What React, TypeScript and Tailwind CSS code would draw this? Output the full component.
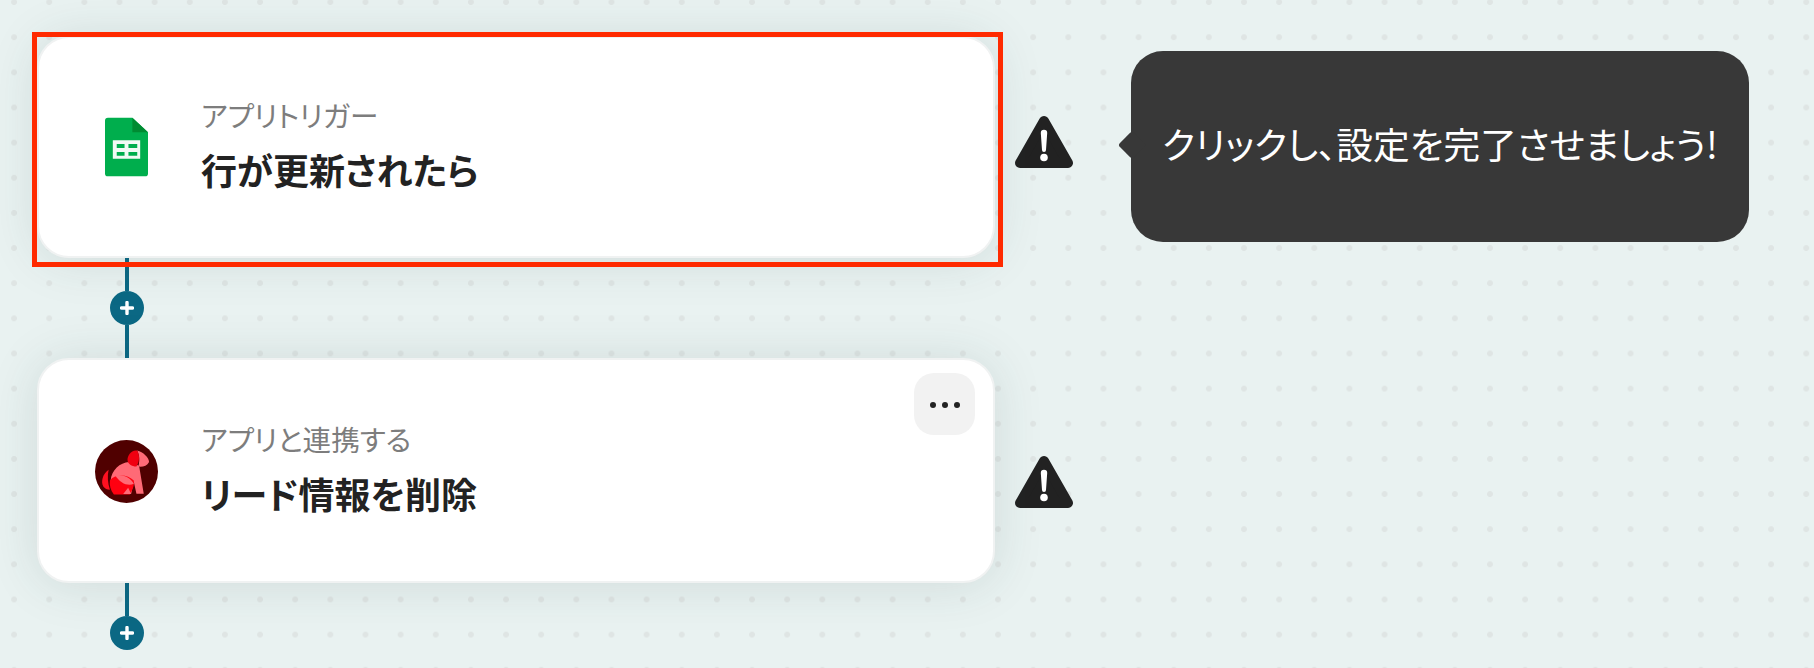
import React from "react";

const FONT = "font-['Noto_Sans_CJK_JP','Noto_Sans',sans-serif] [font-feature-settings:'palt']";

function SheetsIcon() {
  return (
    <svg width="43" height="60" viewBox="0 0 44 60" className="mb-[1px] mr-[3px]">
      <path d="M3 0H28L44 15V57a3 3 0 0 1-3 3H3a3 3 0 0 1-3-3V3a3 3 0 0 1 3-3Z" fill="#00ae4d" />
      <path d="M28 0L44 15H28Z" fill="#008b32" />
      <path fillRule="evenodd" d="M8 23H36V42H8ZM12 27V31H20V27ZM24 27V31H33V27ZM12 35V39H20V35ZM24 35V39H33V35Z" fill="#f1faf4" />
    </svg>
  );
}

function DogIcon() {
  return (
    <svg width="63" height="63" viewBox="105 118 190 190" className="mr-[2px] mt-[2px] shrink-0">
      <circle cx="200" cy="213" r="95" fill="#500000" />
      <path d="M146 208C128 220 122 245 130 258C134 264 142 268 150 268C143 248 142 226 146 208Z" fill="#ff1020" />
      <path d="M152 240C155 208 180 186 208 184L238 196L252 280H230L222 244L214 280H165Z" fill="#ff6a76" />
      <path d="M232 150C250 154 268 172 268 184C262 196 248 200 236 198C240 180 240 165 232 150Z" fill="#ff6a76" />
      <path d="M232 150C214 147 203 165 203 178C204 190 215 197 230 198C240 182 240 165 232 150Z" fill="#f00010" />
      <path d="M150 240C165 218 205 222 222 240C225 258 215 272 210 282H162C152 270 148 255 150 240Z" fill="#ff0010" />
      <path d="M166 224C192 220 212 232 222 250C204 258 180 248 166 224Z" fill="#ff6a76" />
      <path d="M190 281L205 262L214 281Z" fill="#ff6a76" />
    </svg>
  );
}

function WarningIcon({ className }: { className: string }) {
  return (
    <svg className={className} width="60" height="54" viewBox="0 0 60 54">
      <path d="M30 6L54 48H6Z" fill="#222222" stroke="#222222" strokeWidth="10" strokeLinejoin="round" />
      <path d="M26.8 18a3.2 3.2 0 0 1 6.4 0L32 35a2 2 0 0 1-4 0Z" fill="#ffffff" />
      <circle cx="30" cy="42.5" r="3.8" fill="#ffffff" />
    </svg>
  );
}

function Connector({ tail }: { tail?: boolean }) {
  return (
    <div className="ml-[73px] flex w-[34px] flex-col items-center">
      <div className="h-[33px] w-[4px] bg-[#0b6884]" />
      <div className="flex h-[34px] w-[34px] items-center justify-center rounded-full bg-[#0b6884]">
        <svg width="14" height="14" viewBox="0 0 14 14">
          <path d="M7 1.5V12.5M1.5 7H12.5" stroke="#ffffff" strokeWidth="3.4" strokeLinecap="round" />
        </svg>
      </div>
      {tail && <div className="h-[33px] w-[4px] bg-[#0b6884]" />}
    </div>
  );
}

function Card({ icon, sub, title, tall, children }: { icon: React.ReactNode; sub: string; title: string; tall?: boolean; children?: React.ReactNode }) {
  return (
    <div className={`relative flex w-[958px] items-center rounded-[32px] border-2 border-[#f0f2f2] bg-white pl-[57px] shadow-[0_2px_50px_rgba(40,70,70,0.13)] ${tall ? "h-[225px]" : "h-[222px]"}`}>
      <div className="flex w-[63px] justify-center">{icon}</div>
      <div className="ml-[42px] flex flex-col">
        <div className="mt-[-4px] text-[28.6px] leading-[36px] text-[#7d7d7d]">{sub}</div>
        <div className="mt-[12px] text-[36px] font-bold leading-[48px] text-[#222222]">{title}</div>
      </div>
      {children}
    </div>
  );
}

export default function App() {
  return (
    <div className={`${FONT} relative h-[668px] w-[1814px] overflow-hidden bg-[#e9f2f1] bg-[radial-gradient(circle,#dfe5e4_2.6px,transparent_3.2px)] bg-[length:35.15px_35.15px] bg-[position:-3.5px_-15.5px] pl-[37px] pt-[36px]`}>
      <div className="flex items-start">
        <div className="relative">
          <Card icon={<SheetsIcon />} sub="アプリトリガー" title="行が更新されたら" />
          <div className="absolute left-[-5px] top-[-4px] h-[235px] w-[971px] border-[5px] border-[#ff2a00]" />
        </div>
        <WarningIcon className="ml-[19px] mt-[79px]" />
        <div className="relative ml-[57px] mt-[15px] flex h-[191px] w-[618px] items-center justify-center rounded-[32px] bg-[#383838] pb-[6px] text-[36.7px] text-white">
          <div className="absolute left-[-9px] top-[84px] h-[20px] w-[20px] rotate-45 rounded-[3px] bg-[#383838]" />
          <span className="relative">クリックし、設定を完了させましょう!</span>
        </div>
      </div>
      <Connector tail />
      <div className="flex items-start">
        <Card tall icon={<DogIcon />} sub="アプリと連携する" title="リード情報を削除">
          <div className="absolute right-[18px] top-[13px] flex h-[62px] w-[61px] items-center justify-center gap-[6px] rounded-[20px] bg-[#f2f2f2] pt-[2px]">
            <span className="h-[6px] w-[6px] rounded-full bg-[#222222]" />
            <span className="h-[6px] w-[6px] rounded-full bg-[#222222]" />
            <span className="h-[6px] w-[6px] rounded-full bg-[#222222]" />
          </div>
        </Card>
        <WarningIcon className="ml-[19px] mt-[97px]" />
      </div>
      <Connector />
    </div>
  );
}
